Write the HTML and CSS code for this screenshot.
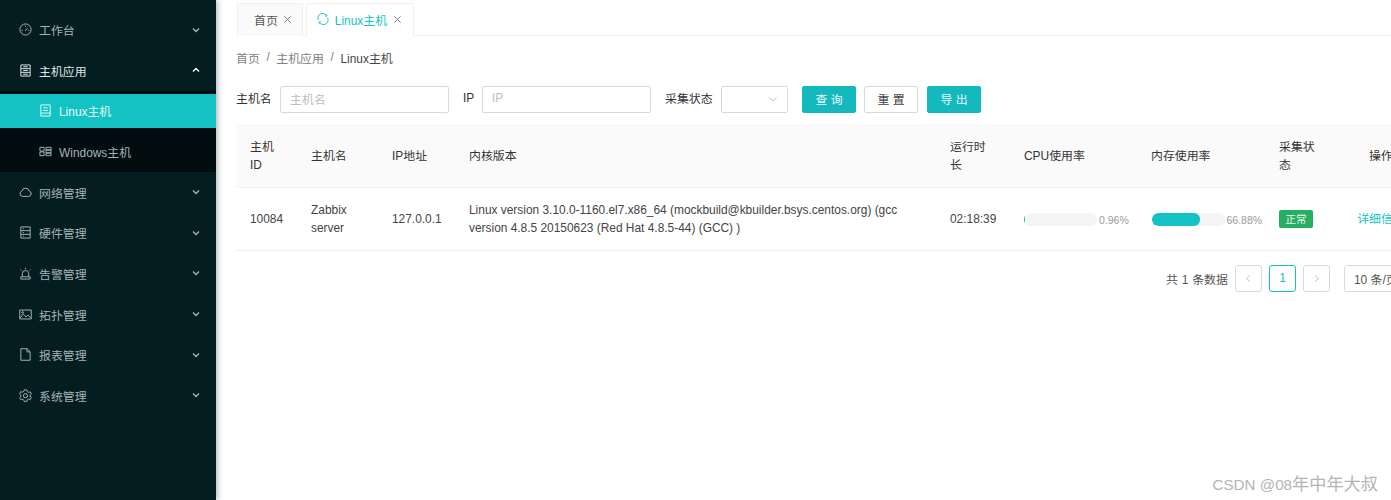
FILE: index.html
```html
<!DOCTYPE html>
<html lang="zh">
<head>
<meta charset="utf-8">
<title>Linux主机</title>
<link rel="stylesheet" href="styles.css">
</head>
<body>
<div class="app">
  <aside class="sider">
    <nav class="menu">
      <div class="item"><svg class="ico" viewBox="0 0 14 14"><circle cx="7" cy="7" r="6"/><path d="M6.6 8.4l2.8-3M2.8 8h1.2M10 8h1.2M7 2.8V4"/></svg><span class="label">工作台</span><svg class="arrow" viewBox="0 0 10 10"><path d="M2 3.5L5 6.5 8 3.5"/></svg></div>
      <div class="item open"><svg class="ico" viewBox="0 0 14 14"><path d="M2 1h10v12H2zM2 5h10M2 9h10M4.5 3h5M4.5 7h5M4.5 11h5"/></svg><span class="label">主机应用</span><svg class="arrow" viewBox="0 0 10 10"><path d="M2 6.5L5 3.5 8 6.5"/></svg></div>
      <div class="submenu">
        <div class="subitem active"><svg class="ico" viewBox="0 0 14 14"><path d="M2 1h10v12H2zM4.5 4.2h5M4.5 7h5M2 9.8h10"/></svg><span>Linux主机</span></div>
        <div class="subitem"><svg class="ico" viewBox="0 0 14 14"><path d="M1 2.5h4.5v4H1zM1 7.5h4.5v4H1zM7.5 2.5H13v2.6H7.5zM7.5 5.7H13v2.6H7.5zM7.5 8.9H13v2.6H7.5z"/></svg><span>Windows主机</span></div>
      </div>
      <div class="item"><svg class="ico" viewBox="0 0 14 14"><path d="M3.8 11.2h6.6a2.9 2.9 0 0 0 .6-5.7 4.1 4.1 0 0 0-8 .1 2.9 2.9 0 0 0 .8 5.6z"/></svg><span class="label">网络管理</span><svg class="arrow" viewBox="0 0 10 10"><path d="M2 3.5L5 6.5 8 3.5"/></svg></div>
      <div class="item"><svg class="ico" viewBox="0 0 14 14"><path d="M2 1h10v12H2zM2 5h10M2 9h10M4.2 3h1M4.2 7h1M4.2 11h1"/></svg><span class="label">硬件管理</span><svg class="arrow" viewBox="0 0 10 10"><path d="M2 3.5L5 6.5 8 3.5"/></svg></div>
      <div class="item"><svg class="ico" viewBox="0 0 14 14"><path d="M3.6 10.6V7.2a3.4 3.4 0 0 1 6.8 0v3.4M2 13h10v-2.4H2zM7 .8v1.6M1.6 2.8l1.1 1.1M12.4 2.8l-1.1 1.1"/></svg><span class="label">告警管理</span><svg class="arrow" viewBox="0 0 10 10"><path d="M2 3.5L5 6.5 8 3.5"/></svg></div>
      <div class="item"><svg class="ico" viewBox="0 0 14 14"><path d="M.8 2.2h12.4v9.6H.8zM1.2 10.8l3.4-4.3 3 3.2 2-2 3.2 3.1"/><circle cx="4" cy="4.8" r=".9"/></svg><span class="label">拓扑管理</span><svg class="arrow" viewBox="0 0 10 10"><path d="M2 3.5L5 6.5 8 3.5"/></svg></div>
      <div class="item"><svg class="ico" viewBox="0 0 14 14"><path d="M2 .8h6.8L12 4v9.2H2zM8.6 .8v3.4H12"/></svg><span class="label">报表管理</span><svg class="arrow" viewBox="0 0 10 10"><path d="M2 3.5L5 6.5 8 3.5"/></svg></div>
      <div class="item"><svg class="ico" viewBox="0 0 14 14"><path d="M5.7.9h2.6l.4 1.8 1.6.9 1.8-.5 1.3 2.3-1.4 1.3v1.8l-.2-.7 1.6 1.3-1.3 2.3-1.8-.5-1.6.9-.4 1.8H5.7l-.4-1.8-1.6-.9-1.8.5L.6 9.6l1.4-1.3V6.5L.6 5.2l1.3-2.3 1.8.5 1.6-.9z"/><circle cx="7" cy="7.2" r="2.3"/></svg><span class="label">系统管理</span><svg class="arrow" viewBox="0 0 10 10"><path d="M2 3.5L5 6.5 8 3.5"/></svg></div>
    </nav>
  </aside>
  <main class="main">
    <div class="tabs">
      <div class="tab"><span>首页</span><svg class="close" viewBox="0 0 10 10"><path d="M1.5 1.5l7 7M8.5 1.5l-7 7"/></svg></div>
      <div class="tab current"><svg class="sync" viewBox="0 0 14 14"><path d="M1.8 8.6A5.4 5.4 0 0 1 11.2 3.2M12.2 5.4A5.4 5.4 0 0 1 2.8 10.8M11.4 1.4v2.2H9.2M2.6 12.6v-2.2h2.2"/></svg><span>Linux主机</span><svg class="close" viewBox="0 0 10 10"><path d="M1.5 1.5l7 7M8.5 1.5l-7 7"/></svg></div>
    </div>
    <div class="crumbs"><span>首页</span><i>/</i><span>主机应用</span><i>/</i><span class="now">Linux主机</span></div>
    <form class="filters">
      <label class="flabel name">主机名</label><div class="input">主机名</div>
      <label class="flabel ip">IP</label><div class="input">IP</div>
      <label class="flabel status">采集状态</label>
      <div class="select"><svg viewBox="0 0 12 12"><path d="M1.5 4L6 8.5 10.5 4"/></svg></div>
      <div class="btn primary first">查 询</div>
      <div class="btn">重 置</div>
      <div class="btn primary">导 出</div>
    </form>
    <table class="table">
      <colgroup><col class="c1"><col class="c2"><col class="c3"><col class="c4"><col class="c5"><col class="c6"><col class="c7"><col class="c8"><col class="c9"></colgroup>
      <thead>
        <tr><th>主机ID</th><th>主机名</th><th>IP地址</th><th>内核版本</th><th>运行时长</th><th>CPU使用率</th><th>内存使用率</th><th class="narrow">采集状态</th><th class="center">操作</th></tr>
      </thead>
      <tbody>
        <tr>
          <td>10084</td>
          <td>Zabbix server</td>
          <td>127.0.0.1</td>
          <td>Linux version 3.10.0-1160.el7.x86_64 (mockbuild@kbuilder.bsys.centos.org) (gcc version 4.8.5 20150623 (Red Hat 4.8.5-44) (GCC) )</td>
          <td>02:18:39</td>
          <td><div class="progress"><div class="track"><div class="fill" style="width:0.96%"></div></div><span>0.96%</span></div></td>
          <td><div class="progress second"><div class="track"><div class="fill" style="width:66.88%"></div></div><span>66.88%</span></div></td>
          <td><span class="tag">正常</span></td>
          <td class="center"><a class="link">详细信息</a></td>
        </tr>
      </tbody>
    </table>
    <div class="pager">
      <span class="total">共 1 条数据</span>
      <div class="page"><svg viewBox="0 0 10 10"><path d="M6.5 1.5L3 5l3.5 3.5"/></svg></div>
      <div class="page on">1</div>
      <div class="page"><svg viewBox="0 0 10 10"><path d="M3.5 1.5L7 5 3.5 8.5"/></svg></div>
      <div class="size">10 条/页</div>
    </div>
  </main>
</div>
<div class="watermark"><span class="wm-latin">CSDN @08</span>年中年大叔</div>
</body>
</html>
```
FILE: styles.css
```css
* { box-sizing: border-box; }
html, body { margin: 0; height: 500px; overflow: hidden; background: #fff; }
body { font-family: "Liberation Sans", "Noto Sans CJK SC", sans-serif; font-size: 11.92px; color: #3c3c3c; }
svg { fill: none; stroke: currentColor; stroke-width: 1.05; display: block; flex: none; }

.app { display: flex; width: 1391px; height: 500px; }
.sider { width: 216px; flex: none; height: 500px; background: #041d21; box-shadow: 2px 0 5px rgba(0,21,41,.28); position: relative; padding-top: 9.5px; color: #a5b3b3; }

.item { height: 40.67px; display: flex; align-items: center; padding: 0 15px 0 19px; }
.item.open { color: #dfe7e7; }
.ico { width: 13px; height: 13px; margin-right: 7px; }
.label { flex: 1; }
.arrow { width: 10px; height: 10px; stroke-width: 1.4; }
.item.open .arrow { color: #fff; }

.submenu { background: #010d0f; padding-top: 3px; height: 81px; }
.subitem { height: 34px; display: flex; align-items: center; padding-left: 39px; }
.subitem + .subitem { height: 47px; }
.subitem.active { background: #13c2c2; color: #eafafa; }

.main { flex: 1; min-width: 0; overflow: hidden; padding: 3px 0 0 20px; }

.tabs { display: flex; gap: 3px; height: 33px; padding-left: 1px; border-bottom: 1px solid #ededed; }
.tab { height: 33px; display: flex; align-items: center; padding: 0 10px 2px 16px; background: #fafafa; border: 1px solid #f0f0f0; border-bottom: 0; border-radius: 2px 2px 0 0; color: #555; }
.tab.current { background: #fff; color: #13c2c2; padding: 0 11px 2px 10px; }
.close { width: 9px; height: 9px; margin: 1px 0 0 5px; color: #777; }
.current .close { margin-left: 6px; }
.sync { width: 12px; height: 12px; margin-right: 6px; }

.crumbs { display: flex; align-items: center; height: 18px; margin-top: 12px; color: #808080; }
.crumbs i { font-style: normal; width: 16.5px; text-align: center; }
.crumbs .now { color: #444; }

.filters { display: grid; grid-template-columns: 44px 169px 33px 169px 70px 67px 67px 63px 63px; align-items: center; margin-top: 19px; height: 27px; width: 745px; }
.flabel { color: #333; padding-bottom: 3px; }
.ip, .status { padding-left: 14px; }
.input { height: 27px; border: 1px solid #d9d9d9; border-radius: 2px; display: flex; align-items: center; padding: 0 0 2px 9px; color: #bdbdbd; }
.select { height: 27px; border: 1px solid #d9d9d9; border-radius: 2px; display: flex; align-items: center; justify-content: flex-end; padding-right: 9px; color: #bbb; }
.select svg { width: 10px; height: 10px; }
.btn { width: 54px; height: 27px; margin-top: 1px; margin-left: 9px; padding-bottom: 2px; border: 1px solid #d9d9d9; border-radius: 2px; display: flex; align-items: center; justify-content: center; white-space: pre; color: #444; }
.btn.primary { background: #13b9bd; border-color: #13b9bd; color: #e9fbfb; }
.btn.first { margin-left: 14px; }

.table { table-layout: fixed; width: 1183px; border-collapse: collapse; margin-top: 12px; line-height: 18px; }
.c1 { width: 61px; } .c2 { width: 81px; } .c3 { width: 77px; } .c4 { width: 481px; } .c5 { width: 74px; }
.c6 { width: 127px; } .c7 { width: 128px; } .c8 { width: 78px; } .c9 { width: 76px; }
th { height: 63px; background: #fafafa; font-weight: 400; text-align: left; padding: 2px 14px 0; color: #333; border-bottom: 1px solid #f2f2f2; }
th.narrow { padding-right: 26px; }
td { height: 63px; padding: 1px 14px 0; color: #444; border-bottom: 1px solid #f0f0f0; }
th.center { text-align: center; padding: 2px 0 0; }
td.center { text-align: center; padding: 1px 0 0; }
.link { color: #13c2c2; }

.progress { display: flex; align-items: center; gap: 2.5px; width: 115px; margin-top: 1px; }
.progress.second { margin-left: 1px; gap: 2px; }
.progress span { font-size: 10.5px; color: #9a9a9a; white-space: nowrap; }
.track { width: 72.5px; height: 12.5px; flex: none; border-radius: 6px; background: #f5f5f5; overflow: hidden; }
.fill { height: 12.5px; background: #13c2c2; border-radius: 6px; }
.tag { display: inline-block; width: 34px; height: 18px; line-height: 18px; text-align: center; font-size: 10.5px; background: #27ae60; color: #e6f7ed; border-radius: 2px; }

.pager { display: flex; align-items: center; margin: 14px 0 0 930px; width: 300px; height: 27px; }
.total { width: 69px; flex: none; color: #555; white-space: nowrap; word-spacing: 0.5px; }
.page { width: 27px; height: 27px; margin-right: 7px; flex: none; border: 1px solid #d9d9d9; border-radius: 3px; display: flex; align-items: center; justify-content: center; color: #bbb; }
.page svg { width: 9px; height: 9px; }
.page.on { border-color: #13c2c2; color: #13c2c2; }
.size { width: 80px; height: 27px; margin-left: 7px; flex: none; border: 1px solid #d9d9d9; border-radius: 3px; display: flex; align-items: center; padding-left: 9px; color: #555; white-space: nowrap; }

.watermark { position: absolute; right: 13px; top: 473px; font-size: 17.2px; line-height: 22px; color: #b4b4b4; white-space: nowrap; }
.wm-latin { font-size: 15.2px; }
```
